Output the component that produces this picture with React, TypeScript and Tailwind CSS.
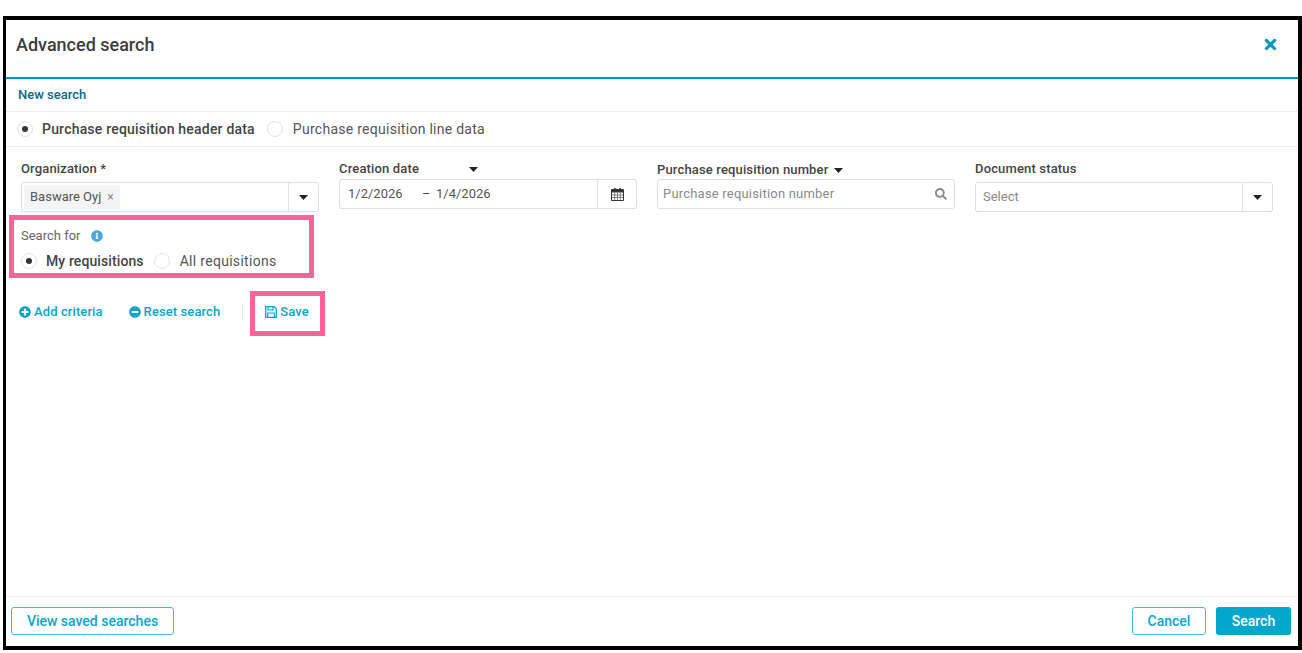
import { FaInfoCircle, FaMinusCircle, FaPlusCircle, FaSearch, FaTimes } from "react-icons/fa";

function Caret({ className = "" }: { className?: string }) {
  return (
    <svg width="9" height="5" viewBox="0 0 9 5" className={className}>
      <path d="M0 0h9L4.5 5z" fill="#222" />
    </svg>
  );
}

function CalendarIcon() {
  return (
    <svg width="13" height="13" viewBox="0 0 13 13">
      <path d="M3 0h1.500v2.500H3zM8.500 0H10v2.500H8.500z" fill="#333" />
      <path d="M.5 1.500h12v11H.5z" fill="none" stroke="#333" />
      <path d="M1 2h11v2.500H1z" fill="#333" />
      <path d="M1 7h11M1 9.500h11M3.700 4.500V12M6.500 4.500V12M9.300 4.500V12" stroke="#666" strokeWidth=".8" />
    </svg>
  );
}

function SaveIcon() {
  return (
    <svg width="12" height="12" viewBox="0 0 12 12" fill="none" stroke="currentColor">
      <path d="M.7.7h8.600l2 2v8.600H.7z" strokeWidth="1.300" />
      <path d="M3 1v3h5V1" strokeWidth="1.200" />
      <path d="M2.700 11V7h6.600v4" strokeWidth="1.200" />
    </svg>
  );
}

function Radio({ checked = false }: { checked?: boolean }) {
  return (
    <span className="flex h-[16px] w-[16px] shrink-0 items-center justify-center rounded-full border border-[#e2e2e2] bg-white">
      {checked && <span className="h-[6px] w-[6px] rounded-full bg-[#333]" />}
    </span>
  );
}

function SelectButton() {
  return (
    <span className="flex h-full w-[30px] shrink-0 items-center justify-center border-l border-[#e2e2e2]">
      <Caret />
    </span>
  );
}

const fieldBox = "flex items-center rounded-[3px] border border-[#dedede] bg-white";
const label = "text-[13px] leading-[16px] font-medium tracking-[0.15px] text-[#444]";

export default function App() {
  return (
    <div className="h-[653px] w-[1302px] bg-white pt-[16px] pl-[3px] pb-[3px] font-['Roboto',sans-serif]">
      <div className="relative flex h-full flex-col border-x-[3px] border-y-[4px] border-black border-r-[4px] bg-white">
        <header className="flex h-[57px] shrink-0 items-center justify-between pb-[8px] pl-[10px] pr-[19px]">
          <h1 className="text-[18px] font-medium text-[#3d3d3d]">Advanced search</h1>
          <FaTimes className="text-[17px] text-[#0a96b8]" />
        </header>
        <div className="h-[3px] shrink-0 border-t-2 border-[#0097b7] bg-[#dff3f7]" />

        <div className="flex h-[32px] shrink-0 items-center border-b border-[#ececec] pb-px pl-[12px] text-[13px] font-medium text-[#0b6a85]">
          New search
        </div>
        <div className="flex h-[35px] shrink-0 items-center border-b border-[#ececec] pl-[11px] text-[14px] tracking-[0.2px]">
          <Radio checked />
          <span className="ml-[9px] font-medium text-[#444]">Purchase requisition header data</span>
          <span className="ml-[12px]"><Radio /></span>
          <span className="ml-[10px] tracking-[0.27px] text-[#555]">Purchase requisition line data</span>
        </div>

        <section className="px-[15px]">
          <div className="grid grid-cols-[298px_298px_298px_298px] gap-x-[20px]">
            <div className="pt-[14px]">
              <div className={label}>Organization *</div>
              <div className={`${fieldBox} mt-[5px] h-[30px]`}>
                <span className="ml-[2px] flex h-[24px] flex-1 items-center">
                  <span className="flex h-[24px] items-center gap-[6px] rounded-[2px] bg-[#f4f4f4] px-[6px] text-[13px] text-[#555]">
                    Basware Oyj <span className="text-[12px] leading-none text-[#888]">×</span>
                  </span>
                </span>
                <SelectButton />
              </div>
            </div>
            <div className="pt-[14px]">
              <div className={`${label} flex items-center justify-between pr-[159px]`}>
                Creation date <Caret />
              </div>
              <div className={`${fieldBox} mt-[2px] h-[30px]`}>
                <span className="ml-[8px] w-[74px] text-[13px] text-[#555]">1/2/2026</span>
                <span className="w-[14px] text-[13px] text-[#555]">–</span>
                <span className="flex-1 text-[13px] text-[#555]">1/4/2026</span>
                <span className="flex h-full w-[39px] items-center justify-center border-l border-[#e2e2e2]">
                  <CalendarIcon />
                </span>
              </div>
            </div>
            <div className="pt-[15px]">
              <div className={`${label} flex items-center gap-[6px]`}>
                Purchase requisition number <Caret />
              </div>
              <div className={`${fieldBox} mt-[1px] h-[30px] justify-between pl-[5px] pr-[7px]`}>
                <span className="text-[13px] tracking-[0.2px] text-[#8a8a8a]">Purchase requisition number</span>
                <FaSearch className="text-[12px] text-[#8a8a8a]" />
              </div>
            </div>
            <div className="pt-[14px]">
              <div className={label}>Document status</div>
              <div className={`${fieldBox} mt-[5px] h-[30px]`}>
                <span className="mb-px ml-[7px] flex-1 text-[13px] text-[#8a8a8a]">Select</span>
                <SelectButton />
              </div>
            </div>
          </div>

          <div className="mt-[16px] flex items-center gap-[10px] text-[13px] leading-[16px] text-[#666]">
            Search for <FaInfoCircle className="text-[12px] text-[#4aa8dc]" />
          </div>
          <div className="mt-[8px] flex h-[18px] items-center text-[14px]">
            <Radio checked />
            <span className="ml-[9px] font-medium tracking-[0.1px] text-[#444]">My requisitions</span>
            <span className="ml-[10px]"><Radio /></span>
            <span className="ml-[10px] tracking-[0.3px] text-[#555]">All requisitions</span>
          </div>

          <div className="mt-[33px] flex h-[18px] items-center text-[13px] font-medium tracking-[0.1px] text-[#0aa5cc]">
            <span className="-ml-[2px] flex items-center gap-[3px]">
              <FaPlusCircle className="text-[12px]" /> Add criteria
            </span>
            <span className="ml-[26px] flex items-center gap-[3px]">
              <FaMinusCircle className="text-[12px]" /> Reset search
            </span>
            <span className="ml-[22px] h-[12px] w-px bg-[#e2e2e2]" />
            <span className="ml-[22px] flex items-center gap-[3px]">
              <SaveIcon /> Save
            </span>
          </div>
        </section>

        <footer className="mt-auto flex h-[50px] shrink-0 items-start justify-between border-t border-[#ececec] pl-[5px] pr-[7px] pt-[10px] text-[14px] font-medium">
          <button className="h-[28px] w-[163px] rounded-[3px] border border-[#3fbcd9] text-[#0aa5cc]">View saved searches</button>
          <div className="flex gap-[10px]">
            <button className="h-[28px] w-[74px] rounded-[3px] border border-[#3fbcd9] text-[#0aa5cc]">Cancel</button>
            <button className="h-[28px] w-[75px] rounded-[3px] bg-[#00a6cb] text-white">Search</button>
          </div>
        </footer>

        {/* annotation frames drawn over the dialog */}
        <div className="pointer-events-none absolute left-[3px] top-[195px] h-[63px] w-[305px] border-[5px] border-[#fb6596]" />
        <div className="pointer-events-none absolute left-[244px] top-[271px] h-[45px] w-[75px] border-[5px] border-[#fb6596]" />
      </div>
    </div>
  );
}
